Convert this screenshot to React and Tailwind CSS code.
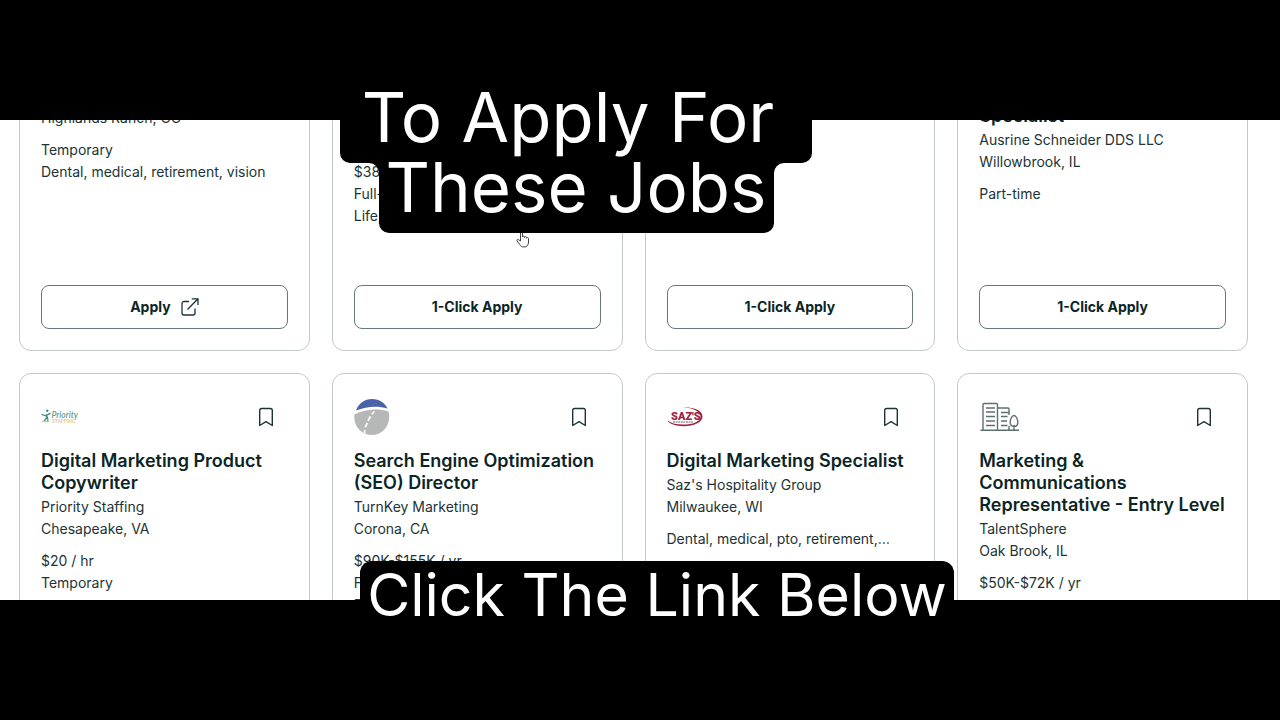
import React from "react";

const jobs = [
  {
    id: 1,
    titleClass: "min-h-[22px]",
    location: "Highlands Ranch, CO",
    details: ["Temporary", "Dental, medical, retirement, vision"],
    external: true,
  },
  {
    id: 2,
    titleClass: "min-h-[44px]",
    details: ["$38", "Full-time", "Life,"],
  },
  { id: 3, titleClass: "min-h-[44px]", details: [] },
  {
    id: 4,
    title: "Specialist",
    titleClass: "min-h-[66px]",
    company: "Ausrine Schneider DDS LLC",
    location: "Willowbrook, IL",
    details: ["Part-time"],
  },
  {
    id: 5,
    logo: "priority",
    title: "Digital Marketing Product Copywriter",
    company: "Priority Staffing",
    location: "Chesapeake, VA",
    details: ["$20 / hr", "Temporary"],
  },
  {
    id: 6,
    logo: "turnkey",
    title: "Search Engine Optimization (SEO) Director",
    company: "TurnKey Marketing",
    location: "Corona, CA",
    details: ["$90K-$155K / yr", "Full-time", "Dental,"],
  },
  {
    id: 7,
    logo: "sazs",
    title: "Digital Marketing Specialist",
    company: "Saz's Hospitality Group",
    location: "Milwaukee, WI",
    details: ["Dental, medical, pto, retirement,…"],
  },
  {
    id: 8,
    logo: "building",
    title: "Marketing & Communications Representative - Entry Level",
    company: "TalentSphere",
    location: "Oak Brook, IL",
    details: ["$50K-$72K / yr"],
  },
];

function PriorityLogo() {
  return (
    <svg width="37" height="36" viewBox="0 0 37 36" aria-hidden="true">
      <circle cx="6.3" cy="11.8" r="1.2" fill="#3f8f86" />
      <path d="M1 15.5c2 1.2 3.4 1.4 5 .6 1.4-.6 2.2-1.3 3-1.6M5.8 15.8c.3 2.2-.3 3.7-2.6 6.4M5.8 17c1 1.6 1.3 3 1 5.5" fill="none" stroke="#3f8f86" strokeWidth="1.4" strokeLinecap="round" />
      <path d="M1 22.5h7" stroke="#c6cf8a" strokeWidth="1.2" />
      <text x="10.5" y="18.5" fontSize="8.5" fontStyle="italic" fontWeight="600" fontFamily="Lato, sans-serif" fill="#5d9c96">Priority</text>
      <text x="11" y="23.5" fontSize="5" fontWeight="700" fontFamily="Lato, sans-serif" fill="#d9cb8c">STAFFING</text>
    </svg>
  );
}

function TurnkeyLogo() {
  return (
    <svg width="36" height="36" viewBox="0 0 36 36" aria-hidden="true">
      <path d="M2 11.5C4.5 4.5 10.5 0 18 0s13 4 15.500 9.500C23 6.500 12.500 7.500 2 11.500z" fill="#4a63a8" />
      <path d="M.5 15.5C11 10.5 23 9 34.5 12.5 37.5 24 30 36 18 36 7 36-1 26.5.5 15.5z" fill="#b5b8b7" />
      <path d="M20.3 12.5c-1 1-1.7 1.9-2.3 2.9M16.6 17.3c-1 1.5-1.8 2.9-2.5 4.5M13.2 23.8c-.7 1.5-1.3 3-1.7 4.6M10.8 31c-.2 1-.2 2.2-.1 3.4" fill="none" stroke="#fff" strokeWidth="1.7" />
    </svg>
  );
}

function SazsLogo() {
  return (
    <svg width="36" height="36" viewBox="0 0 36 36" aria-hidden="true">
      <path d="M16 8.3c11-.3 19.5 3.2 19.5 9.2 0 6-9 9.7-18.5 9.7C8.5 27.2 2 24.8.5 21.5c4 3 9.5 4.2 16 4.1 9-.1 17-3 17-8.2 0-4.600-7-8.300-17.500-9.100z" fill="#9c2345" />
      <text x="4" y="20.5" fontSize="11" fontWeight="900" fontFamily="Roboto, sans-serif" fill="#9c2345">SAZ'S</text>
      <path d="M6 23h20" stroke="#7d5660" strokeWidth="1" strokeDasharray="2 .6" />
    </svg>
  );
}

function BuildingLogo() {
  return (
    <svg width="40" height="36" viewBox="0 0 40 36" fill="none" stroke="#5f6f70" strokeWidth="1.4" aria-hidden="true">
      <path d="M1.5 31.3h38.5M4 31V5.5a1 1 0 0 1 1-1h12.5a1 1 0 0 1 1 1V31M18.5 9h10.5a1 1 0 0 1 1 1v6M30 27v4" />
      <path d="M7 9h9M7 13h9M7 17.5h9M7 22h9M7 26.5h9M22 13.5h8M22 17.5h6.5M22 22h6M22 26.5h6.5" />
      <path d="M35 16.5c-2 0-3.8 3.8-3.8 6.8 0 2.5 1.5 4.2 3.8 4.2s3.8-1.7 3.8-4.2c0-3-1.8-6.8-3.8-6.8zM35 26v5" />
    </svg>
  );
}

function BookmarkIcon() {
  return (
    <svg width="22" height="22" viewBox="0 0 22 22" fill="none" stroke="#1c3435" strokeWidth="1.4" strokeLinejoin="round" aria-hidden="true">
      <path d="M17.3 19.5 11 15.7 4.7 19.5V4.5a2 2 0 0 1 2-2h8.6a2 2 0 0 1 2 2z" />
    </svg>
  );
}

function ExternalIcon() {
  return (
    <svg width="18" height="18" viewBox="0 0 18 18" fill="none" stroke="#1c3435" strokeWidth="1.3" aria-hidden="true">
      <path d="M8 3.5H3a2 2 0 0 0-2 2V15a2 2 0 0 0 2 2h9a2 2 0 0 0 2-2v-4.5M6.5 11.5 16.8 1M10.8.9h6.2V7" />
    </svg>
  );
}

const logos = {
  priority: PriorityLogo,
  turnkey: TurnkeyLogo,
  sazs: SazsLogo,
  building: BuildingLogo,
};

function JobCard({ job }) {
  const Logo = logos[job.logo];

  return (
    <article className="flex min-h-[367px] flex-col rounded-xl border border-[#c3c8c8] p-[21px]">
      <div className="mb-[11px] flex h-11 items-center justify-between">
        <div>{Logo && <Logo />}</div>
        <button aria-label="Save job" className="flex h-11 w-11 items-center justify-center">
          <BookmarkIcon />
        </button>
      </div>

      <h2 className={`flex items-end text-[18px] leading-[22px] font-semibold text-[#0b2526] ${job.titleClass || ""}`}>
        {job.title}
      </h2>
      <p className="mt-[2px] min-h-[22px]">{job.company}</p>
      <p className="min-h-[22px]">{job.location}</p>

      <div className="mt-[10px] mb-auto">
        {job.details.map((line) => (
          <p key={line}>{line}</p>
        ))}
      </div>

      <button className="flex h-11 items-center justify-center gap-[10px] rounded-lg border border-[#667879] font-bold text-[#0b2526]">
        {job.external ? "Apply" : "1-Click Apply"}
        {job.external && <ExternalIcon />}
      </button>
    </article>
  );
}

function App() {
  return (
    <div className="relative flex h-screen flex-col overflow-hidden bg-black font-['Inter',sans-serif]">
      {/* Job list */}
      <main className="my-[120px] min-h-0 flex-1 overflow-hidden bg-white pr-8 pl-[19px]">
        <div className="-mt-[136px] grid grid-cols-4 gap-[22px] text-[14px] leading-[22px] text-[#1b3435]">
          {jobs.map((job) => (
            <JobCard key={job.id} job={job} />
          ))}
        </div>
      </main>

      {/* Pointer */}
      <svg className="absolute top-[230px] left-[516px]" width="14" height="18" viewBox="0 0 14 18" fill="#fff" stroke="#444" strokeWidth="1" strokeLinejoin="round" aria-hidden="true">
        <path d="M4.5 11V1.8c0-1.4 2-1.4 2 0V7c0-1.2 2-1.2 2 0v.5c0-1.2 2-1.1 2 .1v.6c0-1.1 2-1 2 .2V12c0 3-1.5 5-4.5 5-2.5 0-3.5-1-4.5-2.8L1 10.8c-.6-1.2.9-1.9 1.7-1z" />
      </svg>

      {/* Captions */}
      <div className="absolute top-[82px] left-[340px] w-[472px] text-center text-[69px] leading-[70px] whitespace-nowrap text-white">
        <svg className="absolute inset-0" width="472" height="151" viewBox="0 0 472 151" aria-hidden="true">
          <path d="M0 0h472v71a10 10 0 0 1-10 10h-18a10 10 0 0 0-10 10v50a10 10 0 0 1-10 10H49a10 10 0 0 1-10-10V91a10 10 0 0 0-10-10H10A10 10 0 0 1 0 71z" />
        </svg>
        <div className="relative pr-4">To Apply For</div>
        <div className="relative">These Jobs</div>
      </div>
      <div className="absolute top-[561px] left-[360px] h-[72px] w-[594px] rounded-xl bg-black text-center text-[59px] leading-[68px] whitespace-nowrap text-white">
        Click The Link Below
      </div>
    </div>
  );
}

export default App;
